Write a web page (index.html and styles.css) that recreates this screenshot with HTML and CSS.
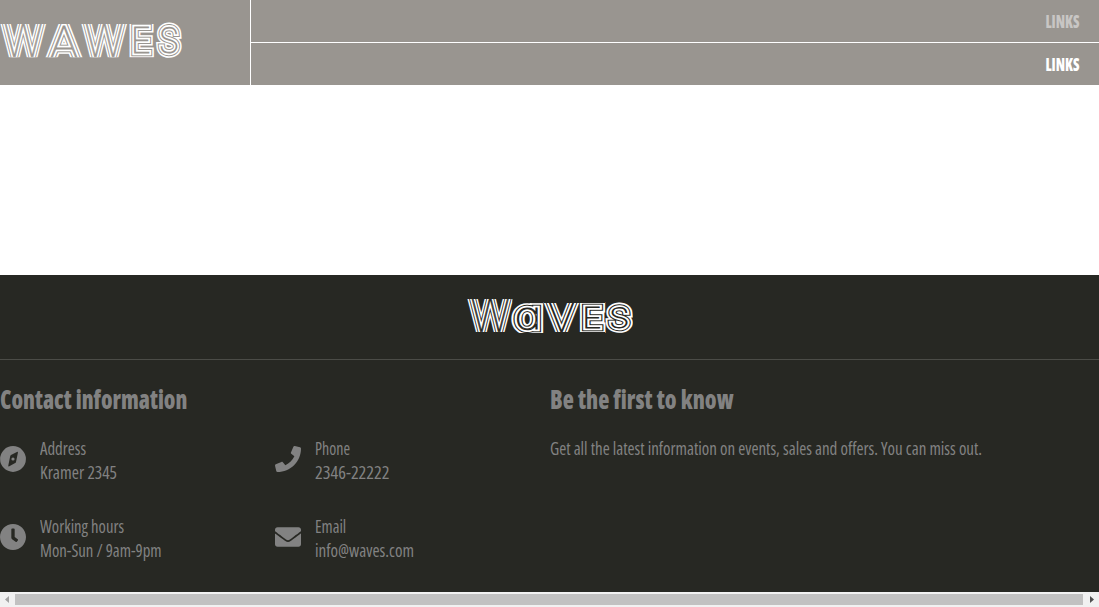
FILE: index.html
```html
<!DOCTYPE html>
<html lang="en">
<head>
<meta charset="utf-8">
<title>Waves</title>
<link rel="stylesheet" href="styles.css">
</head>
<body>
<header class="header">
  <div class="brand">
    <svg class="logo logo-light" width="190" height="85">
      <defs>
        <clipPath id="brand-clip"><path d="M0 24H155V57.3H0zM155 15H190V65H155z"/></clipPath>
      </defs>
      <g clip-path="url(#brand-clip)">
        <text id="brand-word" class="neon"><tspan x="3.5" y="57" textLength="39.5" lengthAdjust="spacingAndGlyphs">W</tspan><tspan x="48.5" y="60" textLength="31" lengthAdjust="spacingAndGlyphs">A</tspan><tspan x="84.5" y="57" textLength="39.5" lengthAdjust="spacingAndGlyphs">W</tspan><tspan class="neon-small" x="130.5" y="53" textLength="21" lengthAdjust="spacingAndGlyphs">E</tspan><tspan class="neon-small" x="158.5" y="53" textLength="21" lengthAdjust="spacingAndGlyphs">S</tspan></text>
        <use href="#brand-word" class="ring ring-1"/><use href="#brand-word" class="ring ring-2"/><use href="#brand-word" class="ring ring-3"/><use href="#brand-word" class="ring ring-4"/>
      </g>
    </svg>
  </div>
  <nav class="nav">
    <a class="nav-row nav-muted"><span class="nav-text">LINKS</span></a>
    <a class="nav-row"><span class="nav-text">LINKS</span></a>
  </nav>
</header>
<main class="main"></main>
<footer class="footer">
  <div class="footer-brand">
    <svg class="logo logo-dark" width="166" height="84">
      <defs>
        <clipPath id="footer-clip"><path d="M0 24H45.5V57H0zM45.5 27.5H77V58H45.5zM77 28H138V57H77zM138 24H166V60H138z"/></clipPath>
      </defs>
      <g clip-path="url(#footer-clip)">
        <text id="footer-word" class="neon"><tspan x="3.5" y="57" textLength="39.5" lengthAdjust="spacingAndGlyphs">W</tspan><tspan class="neon-a" x="47.5" y="53.5" textLength="27" lengthAdjust="spacingAndGlyphs">a</tspan><tspan class="neon-v" x="81" y="57" textLength="27" lengthAdjust="spacingAndGlyphs">v</tspan><tspan class="neon-caps" x="115" y="52.5" textLength="20" lengthAdjust="spacingAndGlyphs">e</tspan><tspan class="neon-caps" x="142" y="53" textLength="20.5" lengthAdjust="spacingAndGlyphs">s</tspan></text>
        <use href="#footer-word" class="ring ring-1"/><use href="#footer-word" class="ring ring-2"/><use href="#footer-word" class="ring ring-3"/><use href="#footer-word" class="ring ring-4"/>
      </g>
    </svg>
  </div>
  <div class="footer-grid">
    <section>
      <h2 class="title"><span class="fit fit-contact">Contact information</span></h2>
      <div class="contacts">
        <div class="contact">
          <svg class="icon" viewBox="0 0 26 26"><circle cx="13" cy="13" r="12.9"/><path class="icon-cut" d="M16.9 5.9q1.3-.5 1 .8l-1.9 9.2q-.2.8-.8 1.2l-5.9 3.2q-1.2.5-1-.8l1.9-9.2q.2-.8.8-1.2z"/><circle cx="13" cy="13" r="1.6"/></svg>
          <p class="lines"><span class="fit fit-address">Address</span><span class="fit fit-street">Kramer 2345</span></p>
        </div>
        <div class="contact">
          <svg class="icon" viewBox="0 0 512 512"><path d="M493.4 24.6l-104-24c-11.3-2.6-22.9 3.3-27.5 13.9l-48 112c-4.2 9.8-1.4 21.3 6.9 28l60.6 49.6c-36 76.7-98.9 140.5-177.2 177.2l-49.6-60.6c-6.8-8.3-18.2-11.1-28-6.9l-112 48C3.9 366.5-2 378.1.6 389.4l24 104C27.1 504.2 36.7 512 48 512c256.1 0 464-207.5 464-464 0-11.2-7.7-20.9-18.6-23.4z"/></svg>
          <p class="lines"><span class="fit fit-phone">Phone</span><span class="fit fit-number">2346-22222</span></p>
        </div>
        <div class="contact">
          <svg class="icon" viewBox="8 8 496 496"><path d="M256,8C119,8,8,119,8,256S119,504,256,504,504,393,504,256,393,8,256,8Zm92.49,313h0l-20,25a16,16,0,0,1-22.49,2.5h0l-67-49.72a40,40,0,0,1-15-31.23V112a16,16,0,0,1,16-16h32a16,16,0,0,1,16,16V256l58,42.5A16,16,0,0,1,348.49,321Z"/></svg>
          <p class="lines"><span class="fit fit-hours">Working hours</span><span class="fit fit-time">Mon-Sun / 9am-9pm</span></p>
        </div>
        <div class="contact">
          <svg class="icon" viewBox="0 0 512 512"><path d="M502.3 190.8c3.9-3.1 9.7-.2 9.7 4.7V400c0 26.5-21.5 48-48 48H48c-26.5 0-48-21.5-48-48V195.6c0-5 5.7-7.8 9.7-4.7 22.4 17.4 52.1 39.5 154.1 113.6 21.1 15.4 56.7 47.8 92.2 47.6 35.7.3 72-32.8 92.3-47.6 102-74.1 131.6-96.3 154-113.7zM256 320c23.2.4 56.6-29.2 73.4-41.4 132.7-96.3 142.8-104.7 173.4-128.7 5.8-4.5 9.2-11.5 9.2-18.9v-19c0-26.5-21.5-48-48-48H48c-26.5 0-48 21.5-48 48v19c0 7.4 3.4 14.3 9.2 18.9 30.6 23.9 40.7 32.4 173.4 128.7 16.8 12.2 50.2 41.8 73.4 41.4z"/></svg>
          <p class="lines"><span class="fit fit-email">Email</span><span class="fit fit-mail">info@waves.com</span></p>
        </div>
      </div>
    </section>
    <section>
      <h2 class="title"><span class="fit fit-first">Be the first to know</span></h2>
      <p class="lines"><span class="fit fit-news">Get all the latest information on events, sales and offers. You can miss out.</span></p>
    </section>
  </div>
</footer>
<div class="scrollbar">
  <svg class="arrow arrow-off" viewBox="0 0 15 15"><path d="M9 4v7L5 7.5z"/></svg>
  <div class="thumb"></div>
  <svg class="arrow arrow-on" viewBox="0 0 16 15"><path d="M7 4v7l4-3.5z"/></svg>
</div>
</body>
</html>
```

FILE: styles.css
```css
* {
  box-sizing: border-box;
}

body {
  margin: 0;
  height: 607px;
  display: flex;
  flex-direction: column;
  overflow: hidden;
  background: #fff;
  font: 400 18px/24px "Open Sans", sans-serif;
  font-stretch: 75%;
}

.header {
  display: flex;
  height: 85px;
  background: #999590;
}

.brand {
  width: 251px;
  border-right: 1px solid #fff;
}

.nav {
  flex: 1;
  display: flex;
  flex-direction: column;
}

.nav-row {
  display: flex;
  align-items: center;
  justify-content: flex-end;
  height: 42px;
  padding: 2px 20px 0 0;
  color: #fff;
  font-size: 17px;
  font-weight: 800;
}

.nav-muted {
  height: 43px;
  border-bottom: 1px solid #fff;
  color: #c8c6c4;
}

.nav-text {
  transform: scaleX(0.84);
  transform-origin: right;
}

.main {
  height: 190px;
}

/* Striped lettering: concentric strokes around a hairline glyph */
.logo {
  display: block;
  --line: #fff;
}

.logo-light {
  --gap: #999590;
}

.logo-dark {
  --gap: #272823;
}

.neon {
  font: 100 46px Inter, sans-serif;
}

.neon-small {
  font-size: 35px;
}

.neon-a {
  font-size: 37px;
  font-feature-settings: "cv11";
}

.neon-v {
  font-size: 40px;
  text-transform: uppercase;
}

.neon-caps {
  font-size: 28px;
  text-transform: uppercase;
}

.ring {
  fill: none;
  stroke: var(--line);
  stroke-linejoin: miter;
}

.ring-1 {
  stroke-width: 9.6;
}

.ring-2 {
  stroke: var(--gap);
  stroke-width: 6.4;
}

.ring-3 {
  stroke-width: 4.4;
}

.ring-4 {
  stroke: var(--gap);
  stroke-width: 0.9;
}

.footer {
  height: 317px;
  background: #272823;
  color: #828282;
}

.footer-brand {
  display: flex;
  justify-content: center;
  height: 85px;
  border-bottom: 1px solid #4b4c47;
}

.footer-grid {
  display: grid;
  grid-template-columns: 550px 1fr;
  padding-top: 23px;
}

.title {
  margin: 0 0 21px;
  font-size: 27px;
  line-height: 32px;
  font-weight: 800;
}

.contacts {
  display: grid;
  grid-template-columns: 275px 275px;
  row-gap: 30px;
}

.contact {
  display: flex;
  align-items: center;
  gap: 14px;
}

.icon {
  width: 26px;
  height: 26px;
  margin-top: -2px;
  fill: #828282;
}

.icon-cut {
  fill: #272823;
}

.lines {
  margin: 0;
  white-space: nowrap;
}

.fit {
  display: block;
  width: max-content;
  transform-origin: left;
}

.fit-contact { transform: scaleX(0.834); }
.fit-first { transform: scaleX(0.85); }
.fit-address { transform: scaleX(0.932); }
.fit-street { transform: scaleX(0.967); }
.fit-phone { transform: scaleX(0.886); }
.fit-number { transform: scaleX(1.01); }
.fit-hours { transform: scaleX(0.924); }
.fit-time { transform: scaleX(0.93); }
.fit-email { transform: scaleX(0.915); }
.fit-mail { transform: scaleX(0.95); }
.fit-news { transform: scaleX(0.942); }

.scrollbar {
  display: flex;
  align-items: center;
  height: 15px;
  background: #f1f1f1;
}

.arrow {
  width: 15px;
  height: 15px;
  fill: #505050;
}

.arrow-on {
  width: 16px;
}

.arrow-off {
  fill: #a3a3a3;
}

.thumb {
  flex: 1;
  height: 11px;
  background: #c1c1c1;
}
```
